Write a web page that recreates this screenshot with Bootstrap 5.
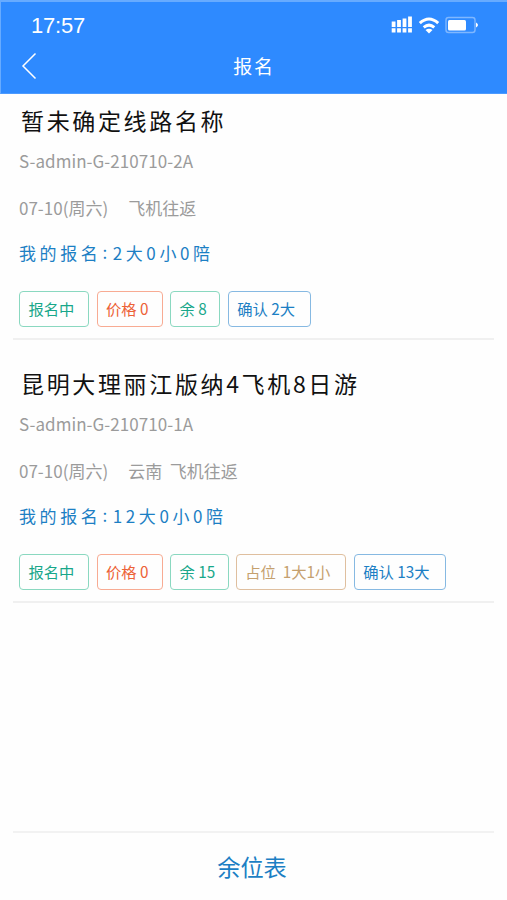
<!DOCTYPE html>
<html lang="zh-CN">
<head>
<meta charset="utf-8">
<meta name="viewport" content="width=device-width, initial-scale=1">
<title>报名</title>
<link href="https://cdn.jsdelivr.net/npm/bootstrap@5.3.0/dist/css/bootstrap.min.css" rel="stylesheet">
<style>
body{font-family:"Noto Sans CJK SC",sans-serif;background:#fefefe;color:#111;height:900px;overflow:hidden}
.topbar{height:94px;background:#2e8aff;border-top:2px solid #67abff;border-left:1px solid #67abff;border-bottom:1px solid #4c9aff}
.status{height:46px;padding:0 29px 0 30px}
.clock{font:22px/48px "Liberation Sans",sans-serif;letter-spacing:-.2px}
.titlebar{height:38px;display:grid;grid-template-columns:60px 1fr 60px}
.titlebar h1{font-size:19px;font-weight:400;line-height:36px;letter-spacing:1.8px}
.trip{height:263px;margin:0 13px;padding:0 6px;border-bottom:2px solid #f0f0f0}
.trip.first{height:246px}
.trip h2{font-size:23px;line-height:34px;font-weight:400;letter-spacing:2.65px;padding-left:2px}
.lead-gap{height:26px}
.trip.first .lead-gap{height:9px}
.meta{font-size:17px;line-height:24px;color:#9b9b9b;white-space:pre}
.code{margin-top:12px;letter-spacing:.06px}
.date{margin-top:23px}
.mine{margin-top:21px;font-size:17px;line-height:24px;letter-spacing:3.6px;color:#1c7fc4}
.mine i{font-style:normal;margin:0 2px 0 1px;vertical-align:1.5px;line-height:1}
.tags{margin-top:26px;gap:7.6px}
.tag{height:36px;border:1px solid;border-radius:4px;padding-left:8.4px;font-size:15.3px;line-height:33px;white-space:pre}
.green{color:#18a78a;border-color:#8ad8c0}
.red{color:#ed6237;border-color:#f8ab93}
.blue{color:#1c7fc4;border-color:#86b9e2}
.tan{color:#c5a06e;border-color:#dfbf9f;padding-left:8px}
.w70{width:70px}.w66{width:66px}.w50{width:50px}.w58{width:58.5px}.w83{width:83px}.w110{width:110px}.w92{width:92px}
.bottom{height:69px;margin:0 13px;padding-right:3px;border-top:2px solid #f2f2f2;color:#1c7fc4;font-size:23.2px;line-height:66px}
</style>
</head>
<body class="d-flex flex-column">
<header class="topbar text-white flex-shrink-0">
  <div class="status d-flex justify-content-between">
    <span class="clock">17:57</span>
    <svg width="88" height="22" viewBox="390 14 88 22" style="margin-top:12px" fill="#fff" aria-hidden="true">
      <g stroke="#fff" stroke-width="3.800"><path d="M393.600 21.500v5.500M399 20v7M404.500 18.500v8.500M410 16.500v10.500M393.600 28.300v4.200M399 28.300v4.200M404.500 28.300v4.200M410 28.300v4.200"/></g>
      <g fill="none" stroke="#fff" stroke-width="3"><path d="M419.800 23.200q9.200-8.400 18.400 0M423.700 27.300q5.300-4.400 10.600 0"/></g>
      <path d="M425.500 30q3.500-2.600 7 0L429 33.400z"/>
      <rect x="446" y="17.500" width="29" height="15" rx="2.500" fill="none" stroke="#7fb7ff" stroke-width="1.400"/>
      <rect x="448" y="20" width="18" height="10.500" rx="1.500"/>
      <path d="M476 22.500q4 2.500 0 5z"/>
    </svg>
  </div>
  <div class="titlebar">
    <svg width="40" height="34" viewBox="1 48 40 34" fill="none" stroke="#fff" stroke-width="1.500" role="img" aria-label="返回"><path d="M35.500 53.500L23 66l12.500 12.500"/></svg>
    <h1 class="text-center m-0">报名</h1>
  </div>
</header>
<main class="flex-grow-1">
  <section class="trip first">
    <div class="lead-gap"></div>
    <h2 class="m-0">暂未确定线路名称</h2>
    <div class="meta code">S-admin-G-210710-2A</div>
    <div class="meta date">07-10(周六)<span class="ms-3 ps-1">飞机往返</span></div>
    <div class="mine">我的报名<i>:</i>2大0小0陪</div>
    <div class="tags d-flex">
      <div class="tag green w70">报名中</div>
      <div class="tag red w66">价格 0</div>
      <div class="tag green w50">余 8</div>
      <div class="tag blue w83">确认 2大</div>
    </div>
  </section>
  <section class="trip">
    <div class="lead-gap"></div>
    <h2 class="m-0">昆明大理丽江版纳4飞机8日游</h2>
    <div class="meta code">S-admin-G-210710-1A</div>
    <div class="meta date">07-10(周六)<span class="ms-3 ps-1">云南  飞机往返</span></div>
    <div class="mine">我的报名<i>:</i>12大0小0陪</div>
    <div class="tags d-flex">
      <div class="tag green w70">报名中</div>
      <div class="tag red w66">价格 0</div>
      <div class="tag green w58">余 15</div>
      <div class="tag tan w110">占位  1大1小</div>
      <div class="tag blue w92">确认 13大</div>
    </div>
  </section>
</main>
<footer class="bottom text-center flex-shrink-0">余位表</footer>
<script src="https://cdn.jsdelivr.net/npm/bootstrap@5.3.0/dist/js/bootstrap.bundle.min.js"></script>
</body>
</html>
